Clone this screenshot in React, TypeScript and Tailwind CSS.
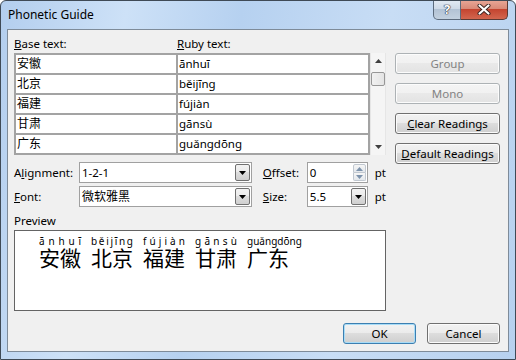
import React from 'react';

const rows = [
  ['安徽', 'ānhuī'],
  ['北京', 'běijīng'],
  ['福建', 'fújiàn'],
  ['甘肃', 'gānsù'],
  ['广东', 'guǎngdōng'],
];

const btnBase = 'h-[21px] rounded-[3px] border text-[11.5px] leading-none flex items-center justify-center';
const btnOn =
  btnBase +
  ' border-[#707070] text-black bg-[linear-gradient(#f2f2f2_0%,#ebebeb_49%,#dddddd_50%,#cfcfcf_100%)] shadow-[inset_0_0_0_1px_#fbfbfb]';
const btnOff =
  btnBase +
  ' border-[#adb2b5] text-[#838383] bg-[linear-gradient(#f4f4f4_0%,#f1f1f1_49%,#e9e9e9_50%,#e3e3e3_100%)] shadow-[inset_0_0_0_1px_#fcfcfc]';

function Tri({ up = false, color = '#000' }: { up?: boolean; color?: string }) {
  return (
    <svg width="7" height="4" viewBox="0 0 7 4">
      <path d={up ? 'M0 4h7L3.5 0z' : 'M0 0h7L3.5 4z'} fill={color} />
    </svg>
  );
}

function DropBtn() {
  return (
    <div className="w-[15px] m-px border border-[#707070] rounded-[2px] bg-[linear-gradient(#f2f2f2_0%,#ebebeb_49%,#dddddd_50%,#cfcfcf_100%)] flex items-center justify-center">
      <Tri />
    </div>
  );
}

function Combo({ w, children }: { w: string; children: React.ReactNode }) {
  return (
    <div className={`${w} h-[21px] border border-[#a0a0a0] bg-white flex items-stretch`}>
      <span className="flex-1 pl-[2px] flex items-center text-[11.5px]">{children}</span>
      <DropBtn />
    </div>
  );
}

export default function App() {
  return (
    <div className="w-[516px] h-[360px] flex flex-col overflow-hidden rounded-t-[6px] border border-[#3f4a56] bg-[linear-gradient(100deg,#b3ceee_0%,#cde1f7_22%,#b6d1f0_42%,#c8ddf5_68%,#b7d1ef_100%)] font-['Noto_Sans','Noto_Sans_CJK_SC',sans-serif] text-black select-none">
      {/* title bar */}
      <div className="h-[28px] flex shrink-0">
        <div className="pl-[7px] flex items-center text-[12px]">Phonetic Guide</div>
        <div className="ml-auto mr-[7px] -mt-px flex h-[20px]">
          <div className="w-[28px] border border-t-0 border-[#5c6b7d] rounded-bl-[5px] bg-[linear-gradient(#e3ebf4_0%,#cfdae7_45%,#b3c3d5_50%,#c3d1e0_100%)] flex items-center justify-center text-[13px] font-bold text-white [text-shadow:0_0_1px_#223,0_0_1px_#223,0_0_1px_#223]">
            ?
          </div>
          <div className="w-[47px] border border-t-0 border-l-0 border-[#5a3a35] rounded-br-[5px] bg-[linear-gradient(#e9a898_0%,#d98a78_45%,#c44530_50%,#d2664f_100%)] flex items-center justify-center">
            <svg width="14" height="11" viewBox="0 0 14 11">
              <path d="M2.5 1.5l9 8M11.5 1.5l-9 8" stroke="#3a2420" strokeWidth="4" strokeLinecap="round" />
              <path d="M2.5 1.5l9 8M11.5 1.5l-9 8" stroke="#fff" strokeWidth="2.2" strokeLinecap="round" />
            </svg>
          </div>
        </div>
      </div>

      {/* client area */}
      <div className="mx-[6px] mb-[7px] flex-1 border border-[#7e8b99] bg-[#f0f0f0] pl-[6px] pr-[8px] flex flex-col text-[11.5px]">
        <div className="flex gap-[9px]">
          {/* left column */}
          <div className="w-[372px] flex flex-col">
            <div className="mt-[6px] h-[16px] flex items-center">
              <span className="w-[163px]">
                <u>B</u>ase text:
              </span>
              <span>
                <u>R</u>uby text:
              </span>
            </div>
            <div className="mt-px flex">
              <div className="w-[356px] bg-[#a3a3a3] p-[2px] grid grid-cols-[160px_190px] gap-[2px]">
                {rows.map(([b, r]) => (
                  <React.Fragment key={b}>
                    <div className="h-[18px] bg-white pl-[1px] flex items-center text-[12px]">{b}</div>
                    <div className="h-[18px] bg-white pl-[1px] flex items-center">{r}</div>
                  </React.Fragment>
                ))}
              </div>
              <div className="w-[16px] bg-[#f5f5f5] border-x border-[#e6e6e6] flex flex-col items-center">
                <div className="h-[15px] flex items-center justify-center">
                  <Tri up color="#404040" />
                </div>
                <div className="mt-[4px] w-[14px] h-[14px] rounded-[2px] border border-[#979797] bg-[linear-gradient(90deg,#f1f1f1,#e4e4e4)]" />
                <div className="flex-1" />
                <div className="h-[17px] flex items-center justify-center">
                  <Tri color="#404040" />
                </div>
              </div>
            </div>

            <div className="mt-[7px] h-[21px] flex items-center">
              <span className="w-[65px]">
                A<u>l</u>ignment:
              </span>
              <Combo w="w-[173px]">1-2-1</Combo>
              <span className="ml-[11px] w-[44px]">
                <u>O</u>ffset:
              </span>
              <div className="w-[61px] h-[21px] border border-[#a0a0a0] bg-white flex">
                <span className="flex-1 pl-[2px] flex items-center">0</span>
                <div className="w-[13px] m-px flex flex-col">
                  <div className="flex-1 border border-[#c1c8d0] rounded-t-[2px] bg-[linear-gradient(#f6f6f6,#e4e8ec)] flex items-center justify-center">
                    <Tri up color="#7d93ac" />
                  </div>
                  <div className="flex-1 border border-t-0 border-[#c1c8d0] rounded-b-[2px] bg-[linear-gradient(#f6f6f6,#e4e8ec)] flex items-center justify-center">
                    <Tri color="#7d93ac" />
                  </div>
                </div>
              </div>
              <span className="ml-[7px]">pt</span>
            </div>

            <div className="mt-[3px] h-[21px] flex items-center">
              <span className="w-[65px]">
                <u>F</u>ont:
              </span>
              <Combo w="w-[173px]">
                <span className="text-[12px]">微软雅黑</span>
              </Combo>
              <span className="ml-[11px] w-[44px]">
                <u>S</u>ize:
              </span>
              <Combo w="w-[61px]">5.5</Combo>
              <span className="ml-[7px]">pt</span>
            </div>

            <div className="mt-[6px] h-[16px] flex items-center">Preview</div>
            <div className="mt-px h-[81px] border border-[#646464] bg-white pl-[24px] pt-[4px] flex gap-[10px]">
              {rows.map(([b, r]) => (
                <div key={b} className="w-[42px] flex flex-col">
                  <div className="h-[12px] flex justify-between whitespace-nowrap text-[10px] leading-[12px]">
                    {Array.from(r).map((c, i) => (
                      <span key={i}>{c}</span>
                    ))}
                  </div>
                  <div className="text-[21px] leading-[21px] whitespace-nowrap font-['Noto_Sans_CJK_SC',sans-serif]">{b}</div>
                </div>
              ))}
            </div>
          </div>

          {/* right buttons */}
          <div className="w-[105px] pt-[23px] flex flex-col gap-[9px]">
            <div className={btnOff}>Group</div>
            <div className={btnOff}>Mono</div>
            <div className={btnOn}>
              <span>
                <u>C</u>lear Readings
              </span>
            </div>
            <div className={btnOn}>
              <span>
                <u>D</u>efault Readings
              </span>
            </div>
          </div>
        </div>

        <div className="mt-[12px] flex justify-end gap-[11px]">
          <div className={btnBase + ' w-[73px] border-[#3c7fb1] bg-[linear-gradient(#f2f2f2_0%,#ebebeb_49%,#dddddd_50%,#cfcfcf_100%)] shadow-[inset_0_0_0_1px_#a8dcf7]'}>
            OK
          </div>
          <div className={btnOn + ' w-[73px]'}>Cancel</div>
        </div>
      </div>
    </div>
  );
}
